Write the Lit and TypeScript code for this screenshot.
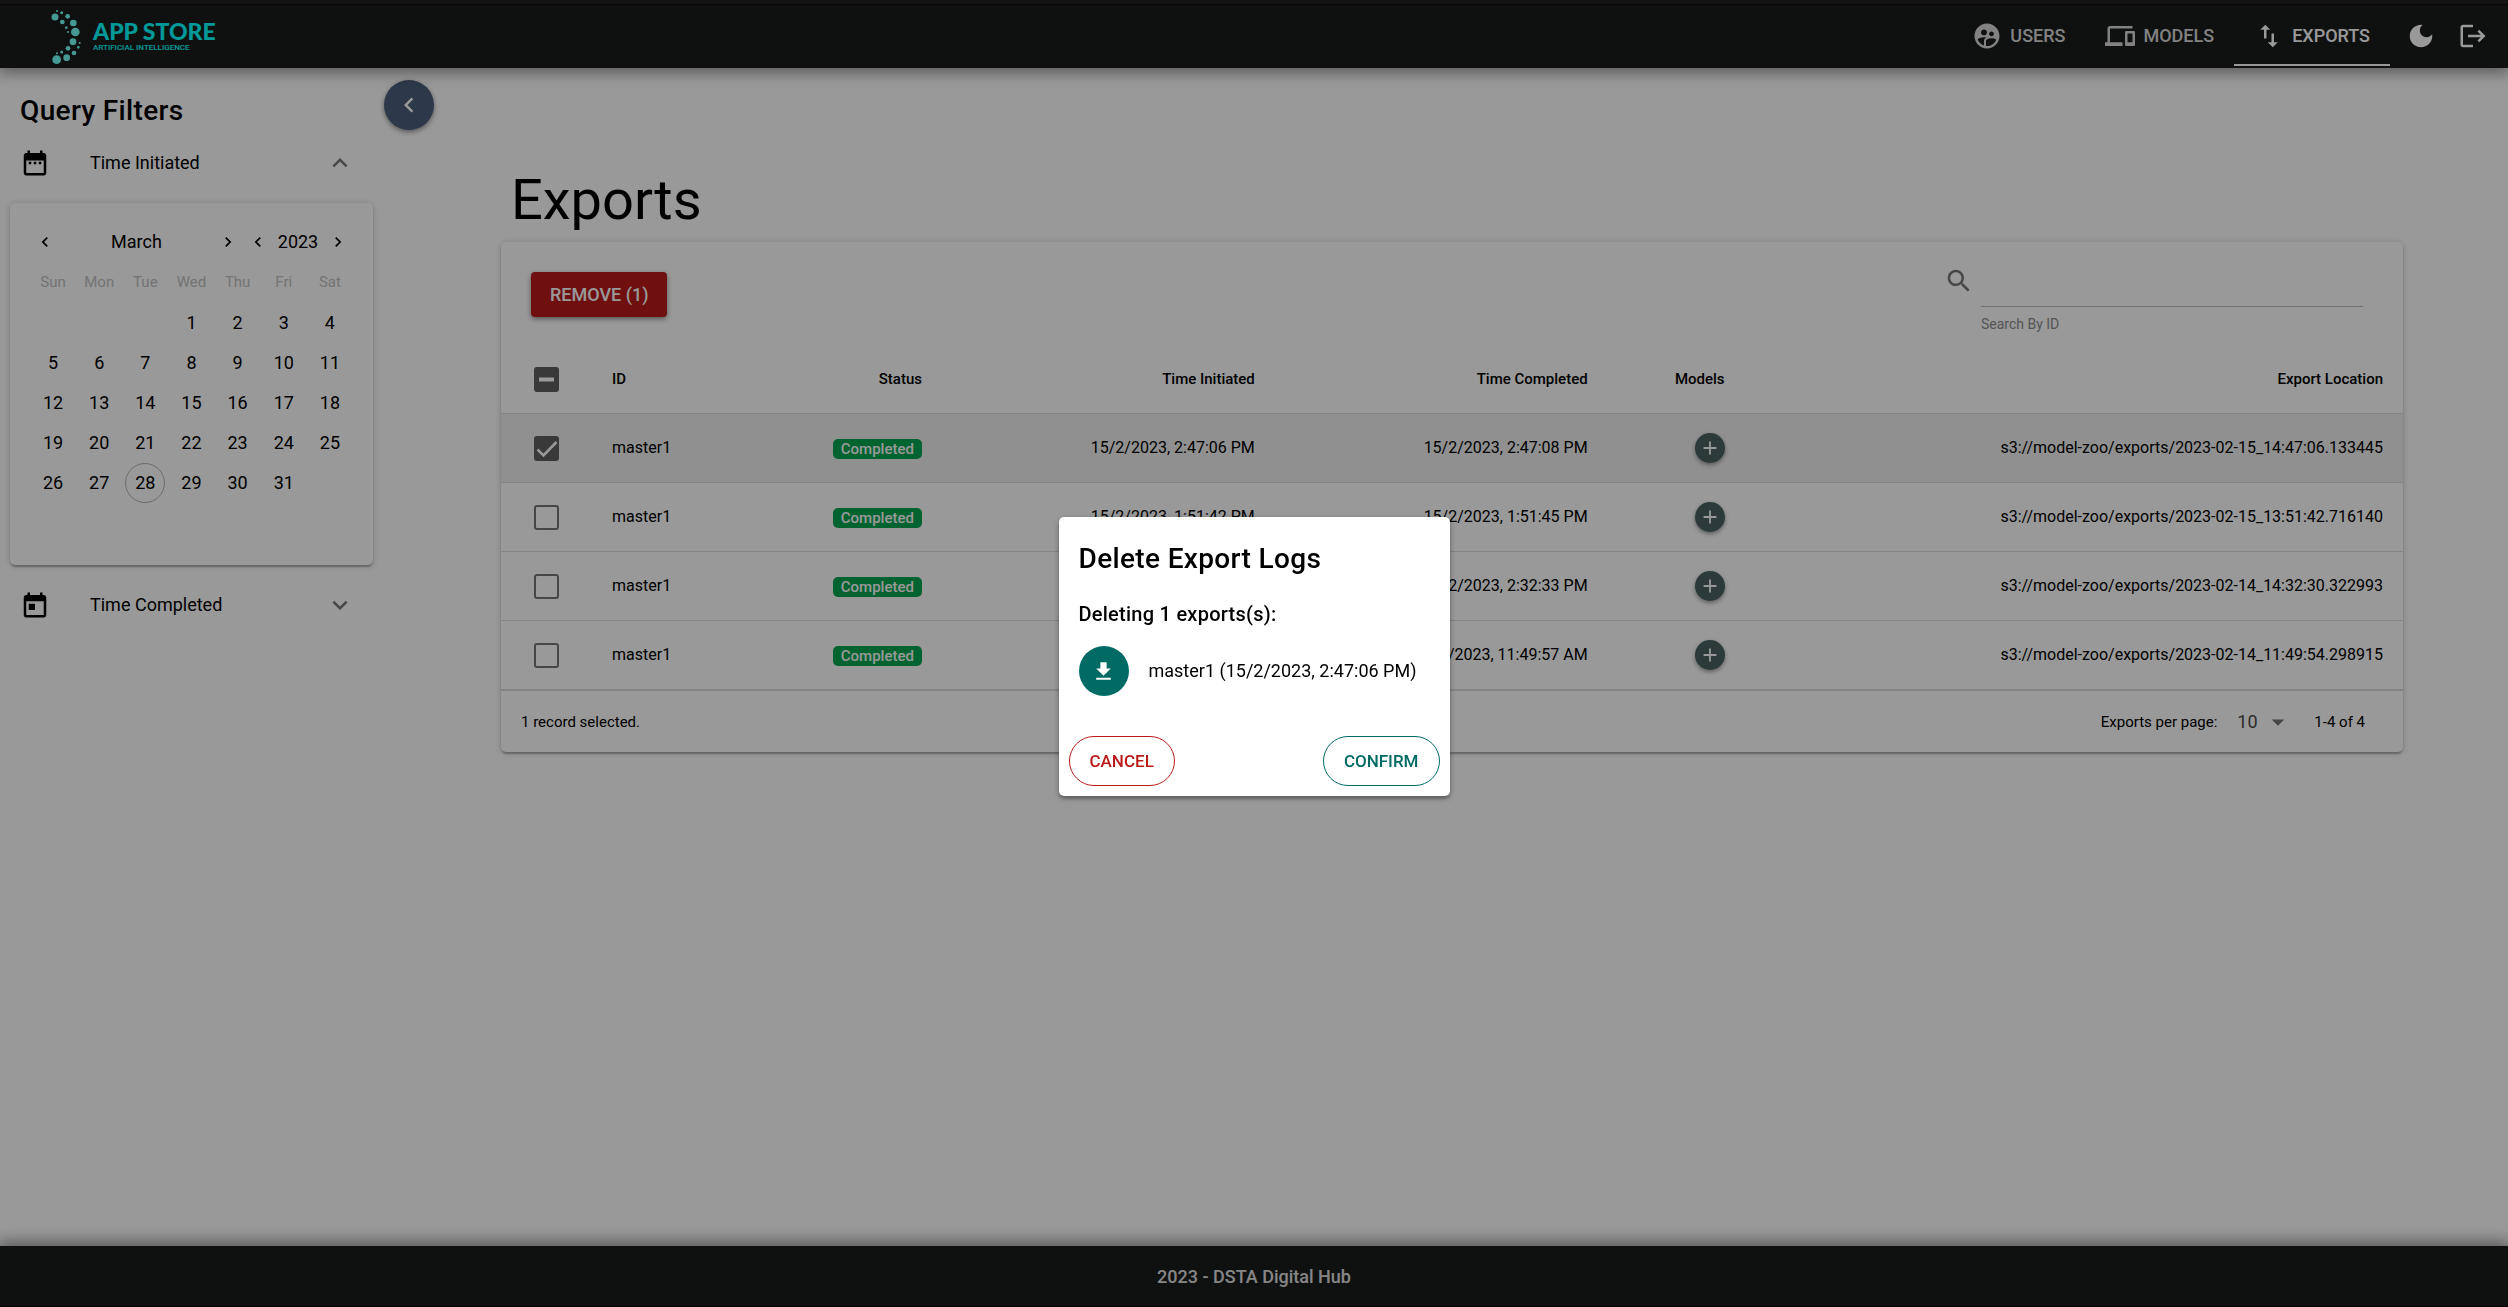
import { LitElement, html, css, svg } from "lit";
import { customElement, property, state } from "lit/decorators.js";
import { classMap } from "lit/directives/class-map.js";

const ICONS: Record<string, string> = {
  users:
    "M11.99 2c-5.52 0-10 4.48-10 10s4.48 10 10 10 10-4.48 10-10-4.48-10-10-10zm3.61 6.34c1.07 0 1.93.86 1.93 1.93 0 1.07-.86 1.93-1.93 1.93-1.07 0-1.93-.86-1.93-1.93-.01-1.07.86-1.93 1.93-1.93zm-6-1.58c1.3 0 2.36 1.06 2.36 2.36 0 1.3-1.06 2.36-2.36 2.36s-2.36-1.06-2.36-2.36c0-1.31 1.05-2.36 2.36-2.36zm0 9.13v3.75c-2.4-.75-4.3-2.6-5.14-4.96 1.05-1.12 3.67-1.69 5.14-1.69.53 0 1.2.08 1.9.22-1.64.87-1.9 2.02-1.9 2.68zM11.99 20c-.27 0-.53-.01-.79-.04v-4.07c0-1.42 2.94-2.13 4.4-2.13 1.07 0 2.92.39 3.84 1.15-1.17 2.97-4.06 5.09-7.45 5.09z",
  models:
    "M4 6h18V4H4c-1.1 0-2 .9-2 2v11H0v3h14v-3H4V6zm19 2h-6c-.55 0-1 .45-1 1v10c0 .55.45 1 1 1h6c.55 0 1-.45 1-1V9c0-.55-.45-1-1-1zm-1 9h-4v-7h4v7z",
  exports: "M9 3L5 6.99h3V14h2V6.99h3L9 3zm7 14.01V10h-2v7.01h-3L15 21l4-3.99h-3z",
  moon: "M12 3c-4.97 0-9 4.03-9 9s4.03 9 9 9 9-4.03 9-9c0-.46-.04-.92-.1-1.36-.98 1.37-2.58 2.26-4.4 2.26-2.98 0-5.4-2.42-5.4-5.4 0-1.81.89-3.42 2.26-4.4-.44-.06-.9-.1-1.36-.1z",
  logout:
    "M17 7l-1.41 1.41L18.17 11H8v2h10.17l-2.58 2.58L17 17l5-5zM4 5h8V3H4c-1.1 0-2 .9-2 2v14c0 1.1.9 2 2 2h8v-2H4V5z",
  dateRange:
    "M7 11h2v2H7v-2zm14-5v14c0 1.1-.9 2-2 2H5c-1.11 0-2-.9-2-2l.01-14c0-1.1.88-2 1.99-2h1V2h2v2h8V2h2v2h1c1.1 0 2 .9 2 2zM5 8h14V6H5v2zm14 12V10H5v10h14zm-4-7h2v-2h-2v2zm-4 0h2v-2h-2v2zM5 6h14v2H5z",
  today:
    "M19 4h-1V2h-2v2H8V2H6v2H5c-1.11 0-1.99.9-1.99 2L3 20c0 1.1.89 2 2 2h14c1.1 0 2-.9 2-2V6c0-1.1-.9-2-2-2zm0 16H5V9h14v11zM7 11h5v5H7z",
  left: "M15.41 7.41L14 6l-6 6 6 6 1.41-1.41L10.83 12z",
  right: "M10 6L8.59 7.41 13.17 12l-4.58 4.59L10 18l6-6z",
  up: "M12 8l-6 6 1.41 1.41L12 10.83l4.59 4.58L18 14z",
  down: "M16.59 8.59L12 13.17 7.41 8.59 6 10l6 6 6-6z",
  search:
    "M15.5 14h-.79l-.28-.27C15.41 12.59 16 11.11 16 9.5 16 5.91 13.09 3 9.5 3S3 5.91 3 9.5 5.91 16 9.5 16c1.61 0 3.09-.59 4.23-1.57l.27.28v.79l5 4.99L20.49 19l-4.99-5zm-6 0C7.01 14 5 11.99 5 9.5S7.01 5 9.5 5 14 7.01 14 9.5 11.99 14 9.5 14z",
  plus: "M19 13h-6v6h-2v-6H5v-2h6V5h2v6h6v2z",
  caret: "M7 10l5 5 5-5z",
  download: "M19 9h-4V3H9v6H5l7 7 7-7zM5 18v2h14v-2H5z",
};

@customElement("app-icon")
export class AppIcon extends LitElement {
  @property() name = "";
  static styles = css`
    :host {
      display: inline-flex;
      flex: none;
      width: 30px;
      height: 30px;
    }
    svg {
      width: 100%;
      height: 100%;
      fill: currentColor;
    }
  `;
  render() {
    return html`<svg viewBox="0 0 24 24" aria-hidden="true"><path d=${ICONS[this.name] ?? ""}></path></svg>`;
  }
}

interface ExportLog {
  id: string;
  initiated: string;
  completed: string;
  location: string;
}

const LOGS: ExportLog[] = [
  { id: "master1", initiated: "15/2/2023, 2:47:06 PM", completed: "15/2/2023, 2:47:08 PM", location: "s3://model-zoo/exports/2023-02-15_14:47:06.133445" },
  { id: "master1", initiated: "15/2/2023, 1:51:42 PM", completed: "15/2/2023, 1:51:45 PM", location: "s3://model-zoo/exports/2023-02-15_13:51:42.716140" },
  { id: "master1", initiated: "14/2/2023, 2:32:30 PM", completed: "14/2/2023, 2:32:33 PM", location: "s3://model-zoo/exports/2023-02-14_14:32:30.322993" },
  { id: "master1", initiated: "14/2/2023, 11:49:54 AM", completed: "14/2/2023, 11:49:57 AM", location: "s3://model-zoo/exports/2023-02-14_11:49:54.298915" },
];

const WEEKDAYS = ["Sun", "Mon", "Tue", "Wed", "Thu", "Fri", "Sat"];
const DAYS_IN_MONTH = 31;
const TODAY = 28;

// Dots of the brand mark: centre x, centre y, radius.
const LOGO_DOTS = [
  [15, 24, 10.5], [21, 6, 3], [35, 11, 4.5], [53, 22, 7], [37, 39, 7], [70, 42, 10],
  [49, 56, 4], [54, 69, 3], [76, 69, 13], [69, 98, 10], [89, 102, 3], [85, 115, 4],
  [54, 118, 7], [72, 132, 7], [35, 129, 4.5], [21, 133, 3], [20, 152, 13], [50, 146, 10],
];

@customElement("app-root")
export class AppRoot extends LitElement {
  @state() private selected = new Set<number>([0]);

  static styles = css`
    :host {
      display: flex;
      flex-direction: column;
      min-height: 100vh;
      background: #fff;
      color: #000;
      font-family: Roboto, "Liberation Sans", sans-serif;
      font-size: 18px;
      line-height: 26px;
    }
    * {
      box-sizing: border-box;
    }
    button,
    input,
    select {
      font: inherit;
      color: inherit;
      margin: 0;
      padding: 0;
      border: 0;
      background: none;
    }
    h1,
    h2,
    p {
      margin: 0;
    }
    .strip {
      height: 5px;
      background: #232323;
      border-bottom: 1px solid #0c0c0c;
    }
    .header {
      display: flex;
      align-items: stretch;
      height: 63px;
      padding: 0 9px 0 50px;
      background: #191c1b;
      color: #fff;
    }
    .top {
      z-index: 1;
      box-shadow: 0 3px 14px 2px rgba(0, 0, 0, 0.4);
    }
    .brand {
      display: flex;
      align-items: center;
      gap: 12px;
      margin-right: auto;
      color: #00ffff;
      text-decoration: none;
    }
    .mark {
      width: 31px;
      height: 55px;
      fill: #74fff4;
    }
    .brandtext {
      display: flex;
      flex-direction: column;
    }
    .brandname {
      font-family: Lato, sans-serif;
      font-size: 23px;
      font-weight: 900;
      line-height: 22px;
    }
    .tagline {
      font-size: 8px;
      font-weight: 500;
      line-height: 12px;
    }
    .nav {
      display: flex;
      margin-right: 5px;
    }
    .tab {
      display: flex;
      align-items: center;
      gap: 8px;
      padding: 3px 20px 0;
      margin-bottom: 2px;
      border-bottom: 2px solid transparent;
      color: #d9d9d9;
      font-weight: 500;
      text-decoration: none;
    }
    .tab.active {
      border-color: #fff;
      color: #fff;
    }
    .round {
      display: flex;
      flex: none;
      align-items: center;
      justify-content: center;
      width: 52px;
      height: 61px;
    }
    .body {
      display: flex;
      flex: 1;
      align-items: flex-start;
    }
    .drawer {
      width: 375px;
      flex: none;
      padding-top: 23px;
    }
    .heading {
      padding-left: 20px;
      margin-bottom: 2px;
      font-size: 28px;
      font-weight: 500;
      line-height: 40px;
      letter-spacing: 0.0125em;
    }
    .filter {
      display: flex;
      align-items: center;
      width: 100%;
      height: 60px;
      padding: 0 20px;
      text-align: left;
    }
    .filter .label {
      flex: 1;
      margin-left: 40px;
    }
    .muted {
      color: #757575;
    }
    .card {
      background: #fff;
      border-radius: 5px;
      box-shadow:
        0 1px 6px rgba(0, 0, 0, 0.2),
        0 2px 2px rgba(0, 0, 0, 0.14),
        0 4px 1px -2px rgba(0, 0, 0, 0.12);
    }
    .calendar {
      margin: 10px 2px 10px 10px;
      padding: 19px 20px 22px;
    }
    .calnav {
      display: grid;
      grid-template-columns: 30px 1fr 30px 30px 50px 30px;
      align-items: center;
      height: 40px;
      text-align: center;
    }
    .calnav button {
      display: flex;
      justify-content: center;
    }
    .calnav app-icon {
      width: 20px;
      height: 20px;
    }
    .week {
      display: grid;
      grid-template-columns: repeat(7, 1fr);
      line-height: 40px;
      text-align: center;
      font-size: 15px;
      color: #c2c2c2;
    }
    .days {
      display: grid;
      grid-template-columns: repeat(7, 1fr);
      grid-template-rows: repeat(6, 40px);
      place-items: center;
      margin-top: 1px;
    }
    .day {
      width: 40px;
      height: 40px;
      border-radius: 50%;
      text-align: center;
    }
    .day.first {
      grid-column-start: 4;
    }
    .day.today {
      border: 1px solid #b5b5b5;
    }
    .toggle {
      display: flex;
      flex: none;
      align-items: center;
      justify-content: center;
      width: 50px;
      height: 50px;
      margin: 12px 67px 0 9px;
      border-radius: 50%;
      background: #4b607c;
      color: #fff;
      box-shadow: 0 2px 5px rgba(0, 0, 0, 0.45);
    }
    .main {
      flex: 1;
      min-width: 0;
      padding: 100px 105px 40px 0;
    }
    .title {
      margin-bottom: 10px;
      padding-left: 10px;
      font-size: 56px;
      font-weight: 400;
      line-height: 64px;
    }
    .tools {
      display: flex;
      align-items: flex-start;
      justify-content: space-between;
      padding: 20px 40px 12px 30px;
    }
    .remove {
      height: 45px;
      margin-top: 10px;
      padding: 0 19px;
      border-radius: 4px;
      background: #ba1a1a;
      color: #fff;
      font-weight: 500;
      box-shadow: 0 2px 5px rgba(0, 0, 0, 0.45);
    }
    .search {
      display: grid;
      grid-template-columns: 30px 382px;
      column-gap: 7px;
    }
    .search app-icon {
      margin-top: 4px;
    }
    .search input {
      height: 45px;
      border-bottom: 1px solid #bdbdbd;
      outline: none;
    }
    .search label {
      grid-column: 2;
      margin-top: 8px;
      font-size: 14px;
      line-height: 18px;
      color: #8c8c8c;
    }
    .table {
      width: 100%;
      table-layout: fixed;
      border-collapse: separate;
      border-spacing: 0;
      font-size: 16px;
    }
    .table th,
    .table td {
      height: 69px;
      padding: 0 20px;
      border-bottom: 1px solid #dcdcdc;
      text-align: right;
      white-space: nowrap;
    }
    .table th {
      font-size: 15px;
      font-weight: 500;
    }
    .table .start {
      text-align: left;
    }
    .table .tick {
      padding: 0 0 0 33px;
    }
    .chosen {
      background: #f0f0f0;
    }
    .c-check {
      width: 91px;
    }
    .c-id {
      width: 9%;
    }
    .c-status {
      width: 9.4%;
    }
    .c-time {
      width: 17.5%;
    }
    .c-models {
      width: 7.2%;
    }
    .check {
      display: grid;
      width: 25px;
      height: 25px;
      cursor: pointer;
    }
    .check input,
    .check svg {
      grid-area: 1 / 1;
      width: 25px;
      height: 25px;
    }
    .check input {
      appearance: none;
      border: 2px solid #757575;
      border-radius: 3px;
    }
    .check input:checked,
    .check input:indeterminate {
      border-color: #606060;
      background: #606060;
    }
    .check svg {
      pointer-events: none;
      fill: none;
      stroke: #fff;
    }
    .badge {
      display: inline-block;
      padding: 0 8px;
      border-radius: 5px;
      background: #00a651;
      color: #fff;
      font-size: 15px;
      font-weight: 500;
      line-height: 20px;
      vertical-align: middle;
    }
    .add {
      display: inline-flex;
      align-items: center;
      justify-content: center;
      width: 30px;
      height: 30px;
      border-radius: 50%;
      background: #4a6361;
      color: #fff;
      vertical-align: middle;
      box-shadow: 0 2px 4px rgba(0, 0, 0, 0.4);
    }
    .add app-icon {
      width: 22px;
      height: 22px;
    }
    .pager {
      display: flex;
      align-items: center;
      height: 62px;
      padding: 0 38px 0 20px;
      border-top: 1px solid #dcdcdc;
      font-size: 15px;
    }
    .pager .count {
      margin-right: auto;
    }
    .perpage {
      display: grid;
      align-items: center;
      justify-items: end;
      width: 56px;
      margin: 0 21px 0 20px;
      font-size: 18px;
      color: #4a4a4a;
    }
    .perpage select,
    .perpage app-icon {
      grid-area: 1 / 1;
    }
    .perpage select {
      width: 100%;
      appearance: none;
    }
    .perpage app-icon {
      pointer-events: none;
      color: #757575;
    }
    .footer {
      display: flex;
      align-items: center;
      justify-content: center;
      height: 61px;
      padding-top: 2px;
      background: #191c1b;
      color: #e0e0e0;
      font-weight: 500;
      box-shadow: 0 -3px 14px 2px rgba(0, 0, 0, 0.4);
      border-bottom: 1px solid #000;
    }
    .scrim {
      position: fixed;
      inset: 0;
      z-index: 2;
      display: flex;
      align-items: center;
      justify-content: center;
      padding-top: 6px;
      background: rgba(0, 0, 0, 0.4);
    }
    .dialog {
      min-width: 391px;
      border-radius: 5px;
      background: #fff;
      box-shadow:
        0 2px 6px rgba(0, 0, 0, 0.3),
        0 3px 3px rgba(0, 0, 0, 0.2);
    }
    .dialog .heading {
      margin: 0;
      padding: 22px 20px 0;
    }
    .content {
      padding: 20px 20px 40px;
    }
    .lead {
      font-size: 20px;
      font-weight: 500;
      line-height: 30px;
      letter-spacing: 0.0125em;
    }
    .item {
      display: flex;
      align-items: center;
      gap: 20px;
      margin-top: 17px;
    }
    .avatar {
      display: flex;
      align-items: center;
      justify-content: center;
      width: 50px;
      height: 50px;
      border-radius: 50%;
      background: #006a64;
      color: #fff;
    }
    .avatar app-icon {
      width: 25px;
      height: 25px;
    }
    .actions {
      display: flex;
      justify-content: space-between;
      padding: 0 10px 10px;
    }
    .pill {
      height: 50px;
      padding: 0 20px;
      border: 1px solid currentColor;
      border-radius: 25px;
      font-size: 17px;
      font-weight: 500;
    }
    .pill.cancel {
      color: #ba1a1a;
    }
    .pill.confirm {
      color: #006a64;
    }
  `;

  private toggleRow(index: number) {
    const next = new Set(this.selected);
    next.has(index) ? next.delete(index) : next.add(index);
    this.selected = next;
  }

  private toggleAll() {
    this.selected = this.selected.size === LOGS.length ? new Set() : new Set(LOGS.map((_, i) => i));
  }

  private renderCheck(label: string, checked: boolean, partial: boolean, onChange: () => void) {
    const mark = partial
      ? svg`<path d="M5 12.5h15" stroke-width="4"></path>`
      : checked
        ? svg`<path d="M3.5 13.5l6 6L22.5 6" stroke-width="2.6"></path>`
        : null;
    return html`<label class="check">
      <input type="checkbox" aria-label=${label} .checked=${checked} .indeterminate=${partial} @change=${onChange} />
      <svg viewBox="0 0 25 25" aria-hidden="true">${mark}</svg>
    </label>`;
  }

  private renderHeader() {
    return html`<div class="top">
      <div class="strip"></div>
      <header class="header">
        <a class="brand" href="#">
          <svg class="mark" viewBox="0 0 93 165" aria-hidden="true">
            ${LOGO_DOTS.map(([x, y, r]) => svg`<circle cx=${x} cy=${y} r=${r}></circle>`)}
          </svg>
          <span class="brandtext">
            <span class="brandname">APP STORE</span>
            <span class="tagline">ARTIFICIAL INTELLIGENCE</span>
          </span>
        </a>
        <nav class="nav">
          <a class="tab" href="#users"><app-icon name="users"></app-icon>USERS</a>
          <a class="tab" href="#models"><app-icon name="models"></app-icon>MODELS</a>
          <a class="tab active" href="#exports"><app-icon name="exports"></app-icon>EXPORTS</a>
        </nav>
        <button class="round" aria-label="Dark mode"><app-icon name="moon"></app-icon></button>
        <button class="round" aria-label="Log out"><app-icon name="logout"></app-icon></button>
      </header>
    </div>`;
  }

  private renderCalendar() {
    const days = Array.from({ length: DAYS_IN_MONTH }, (_, i) => i + 1);
    return html`<div class="card calendar">
      <div class="calnav">
        <button aria-label="Previous month"><app-icon name="left"></app-icon></button>
        <span>March</span>
        <button aria-label="Next month"><app-icon name="right"></app-icon></button>
        <button aria-label="Previous year"><app-icon name="left"></app-icon></button>
        <span>2023</span>
        <button aria-label="Next year"><app-icon name="right"></app-icon></button>
      </div>
      <div class="week">${WEEKDAYS.map((d) => html`<span>${d}</span>`)}</div>
      <div class="days">
        ${days.map((d) => html`<button class=${classMap({ day: true, first: d === 1, today: d === TODAY })}>${d}</button>`)}
      </div>
    </div>`;
  }

  private renderTable() {
    const n = this.selected.size;
    return html`<table class="table">
      <colgroup>
        <col class="c-check" />
        <col class="c-id" />
        <col class="c-status" />
        <col class="c-time" />
        <col class="c-time" />
        <col class="c-models" />
        <col />
      </colgroup>
      <thead>
        <tr>
          <th class="tick">
            ${this.renderCheck("Select all", n === LOGS.length, n > 0 && n < LOGS.length, () => this.toggleAll())}
          </th>
          <th class="start">ID</th>
          <th>Status</th>
          <th>Time Initiated</th>
          <th>Time Completed</th>
          <th>Models</th>
          <th>Export Location</th>
        </tr>
      </thead>
      <tbody>
        ${LOGS.map(
          (log, i) => html`<tr class=${classMap({ chosen: this.selected.has(i) })}>
            <td class="tick">${this.renderCheck("Select " + log.id, this.selected.has(i), false, () => this.toggleRow(i))}</td>
            <td class="start">${log.id}</td>
            <td><span class="badge">Completed</span></td>
            <td>${log.initiated}</td>
            <td>${log.completed}</td>
            <td><button class="add" aria-label="Show models"><app-icon name="plus"></app-icon></button></td>
            <td>${log.location}</td>
          </tr>`,
        )}
      </tbody>
    </table>`;
  }

  private renderDialog() {
    const chosen = LOGS.filter((_, i) => this.selected.has(i));
    return html`<div class="scrim">
      <section class="dialog" role="dialog" aria-modal="true" aria-labelledby="dialog-title">
        <h2 class="heading" id="dialog-title">Delete Export Logs</h2>
        <div class="content">
          <p class="lead">Deleting ${chosen.length} exports(s):</p>
          ${chosen.map(
            (log) => html`<div class="item">
              <span class="avatar"><app-icon name="download"></app-icon></span>
              <span>${log.id} (${log.initiated})</span>
            </div>`,
          )}
        </div>
        <div class="actions">
          <button class="pill cancel">CANCEL</button>
          <button class="pill confirm">CONFIRM</button>
        </div>
      </section>
    </div>`;
  }

  render() {
    return html`
      ${this.renderHeader()}
      <div class="body">
        <aside class="drawer">
          <h2 class="heading">Query Filters</h2>
          <button class="filter" aria-expanded="true">
            <app-icon name="dateRange"></app-icon>
            <span class="label">Time Initiated</span>
            <app-icon class="muted" name="up"></app-icon>
          </button>
          ${this.renderCalendar()}
          <button class="filter" aria-expanded="false">
            <app-icon name="today"></app-icon>
            <span class="label">Time Completed</span>
            <app-icon class="muted" name="down"></app-icon>
          </button>
        </aside>
        <button class="toggle" aria-label="Collapse filters"><app-icon name="left"></app-icon></button>
        <main class="main">
          <h1 class="title">Exports</h1>
          <section class="card">
            <div class="tools">
              <button class="remove">REMOVE (${this.selected.size})</button>
              <div class="search">
                <app-icon class="muted" name="search"></app-icon>
                <input id="search" type="text" />
                <label for="search">Search By ID</label>
              </div>
            </div>
            ${this.renderTable()}
            <div class="pager">
              <span class="count">${this.selected.size} record selected.</span>
              <label for="perpage">Exports per page:</label>
              <span class="perpage">
                <select id="perpage">
                  <option>10</option>
                  <option>25</option>
                </select>
                <app-icon name="caret"></app-icon>
              </span>
              <span>1-4 of 4</span>
            </div>
          </section>
        </main>
      </div>
      <footer class="footer">2023 - DSTA Digital Hub</footer>
      ${this.renderDialog()}
    `;
  }
}
